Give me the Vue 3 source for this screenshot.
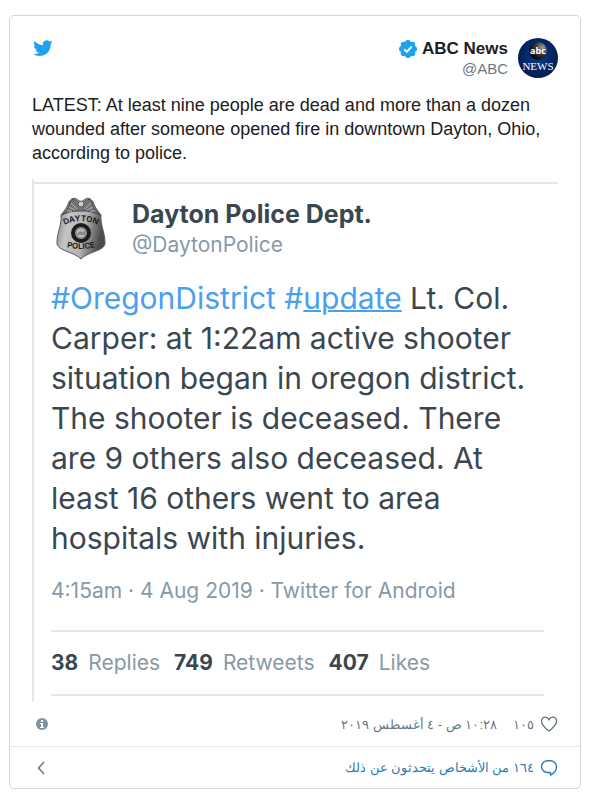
<template>
  <article class="card" dir="rtl">
    <div class="card-body">
      <header class="card-header">
        <a class="author" href="#">
          <svg class="avatar" viewBox="0 0 40 40" aria-hidden="true">
            <defs>
              <radialGradient id="abc-bg" cx="50%" cy="45%" r="60%">
                <stop offset="0" stop-color="#073f8c" />
                <stop offset="1" stop-color="#02184b" />
              </radialGradient>
              <radialGradient id="abc-ball" cx="75%" cy="30%" r="75%">
                <stop offset="0" stop-color="#9d9d9d" />
                <stop offset="0.5" stop-color="#3a3a3a" />
                <stop offset="1" stop-color="#050505" />
              </radialGradient>
            </defs>
            <circle cx="20" cy="20" r="20" fill="url(#abc-bg)" />
            <circle cx="20" cy="13" r="9" fill="url(#abc-ball)" />
            <text class="abc-small" x="20" y="16" text-anchor="middle">abc</text>
            <text class="abc-news" x="20" y="32" text-anchor="middle">NEWS</text>
          </svg>
          <span class="author-text">
            <span class="author-name">
              <bdi>ABC News</bdi>
              <svg class="verified" viewBox="0 0 18 18" role="img" aria-label="حساب موثق">
                <g fill="#1da1f2">
                  <circle cx="9" cy="9" r="7" />
                  <circle v-for="p in petals" :key="p.id" :cx="p.x" :cy="p.y" r="3" />
                </g>
                <path d="M5.2 9.3l2.6 2.6 4.9-5.6" fill="none" stroke="#fff" stroke-width="1.8" />
              </svg>
            </span>
            <span class="author-handle" dir="ltr">@ABC</span>
          </span>
        </a>
        <a class="brand" href="#" aria-label="Twitter">
          <svg viewBox="0 0 24 24" width="20" height="20">
            <path
              fill="#1da1f2"
              d="M23.64 4.94c-.86.38-1.78.64-2.75.75 1-.6 1.75-1.53 2.1-2.65-.92.55-1.95.95-3.04 1.16A4.79 4.79 0 0 0 11.8 8.57C7.82 8.37 4.3 6.46 1.93 3.56A4.8 4.8 0 0 0 3.4 9.95a4.77 4.77 0 0 1-2.17-.6v.06a4.79 4.79 0 0 0 3.84 4.7 4.8 4.8 0 0 1-2.16.08 4.79 4.79 0 0 0 4.47 3.32A9.6 9.6 0 0 1 .3 19.5a13.55 13.55 0 0 0 7.34 2.15c8.8 0 13.62-7.3 13.62-13.62l-.02-.62c.94-.68 1.75-1.52 2.4-2.47z"
            />
          </svg>
        </a>
      </header>

      <p class="tweet-text" dir="ltr">
        LATEST: At least nine people are dead and more than a dozen wounded after
        someone opened fire in downtown Dayton, Ohio, according to police.
      </p>

      <section class="quote" dir="ltr">
        <div class="quote-inner">
          <div class="quote-header">
            <svg class="badge" viewBox="0 0 50 64" aria-hidden="true">
              <defs>
                <linearGradient id="metal" x1="0" x2="1" y1="0" y2="0.25">
                  <stop offset="0" stop-color="#777" />
                  <stop offset="0.3" stop-color="#c4c4c4" />
                  <stop offset="0.65" stop-color="#b4b4b4" />
                  <stop offset="1" stop-color="#4b4b4b" />
                </linearGradient>
                <path id="arc-top" d="M6 30Q25 20 44 30" />
                <path id="arc-bottom" d="M4 49Q25 57 46 49" />
              </defs>
              <path
                d="M5 19C8 15 11 12 13 6C15 2 19 1 22 4L25 6L28 4C31 1 35 2 37 6C39 12 42 15 45 19C44 29 49 36 49 47C49 55 33 55 25 63C17 55 1 55 1 47C1 36 6 29 5 19Z"
                fill="url(#metal)"
                stroke="#555"
              />
              <path
                d="M6 19C10 15 13 12 14 6C16 2 20 3 23 7H27C30 3 34 2 36 6C37 12 40 15 44 19C36 15 31 15 25 15S13 15 6 19Z"
                fill="#737373"
                stroke="#444"
              />
              <path
                d="M15 7l6 6M13 11l6 3M11 15l5 0M35 7l-6 6M37 11l-6 3M39 15l-5 0"
                stroke="#b5b5b5"
                fill="none"
              />
              <circle cx="25" cy="8" r="3" fill="#ccc" stroke="#555" />
              <circle cx="25" cy="37" r="8" fill="#aaa" stroke="#1c1c1c" stroke-width="4" />
              <circle cx="25" cy="37" r="5" fill="#bdbdbd" stroke="#777" />
              <path d="M21 38l3-3 2 1 3-1v4h-8z" fill="#8a8a8a" />
              <text class="badge-text" text-anchor="middle">
                <textPath href="#arc-top" startOffset="50%">DAYTON</textPath>
              </text>
              <text class="badge-text" text-anchor="middle">
                <textPath href="#arc-bottom" startOffset="50%">POLICE</textPath>
              </text>
            </svg>
            <div class="quote-author">
              <strong>Dayton Police Dept.</strong>
              <span>@DaytonPolice</span>
            </div>
          </div>

          <p class="quote-text">
            <a href="#">#OregonDistrict</a> <a href="#">#<u>update</u></a> Lt. Col. Carper: at
            1:22am active shooter situation began in oregon district. The shooter is deceased.
            There are 9 others also deceased. At least 16 others went to area hospitals with
            injuries.
          </p>

          <p class="quote-meta">4:15am · 4 Aug 2019 · Twitter for Android</p>

          <ul class="stats">
            <li v-for="stat in stats" :key="stat.label">
              <strong>{{ stat.count }}</strong>
              <span>{{ stat.label }}</span>
            </li>
          </ul>
        </div>
      </section>

      <div class="info-row">
        <a class="like" href="#">
          <svg viewBox="0 0 18 16" width="18" height="16" aria-hidden="true">
            <path
              d="M9 15C5 12 1.5 9 1.5 5.200C1.500 2.800 3.200 1.200 5.200 1.200C7 1.200 8.300 2.200 9 4C9.700 2.200 11 1.200 12.800 1.200C14.800 1.200 16.500 2.800 16.500 5.200C16.500 9 13 12 9 15Z"
              fill="none"
              stroke="#697882"
              stroke-width="1.3"
              stroke-linejoin="round"
            />
          </svg>
          <span>١٠٥</span>
        </a>
        <a class="date" href="#">١٠:٢٨ ص - ٤ أغسطس ٢٠١٩</a>
        <a class="info" href="#" aria-label="معلومات">
          <svg viewBox="0 0 12 12" width="12" height="12">
            <circle cx="6" cy="6" r="6" fill="#8292a0" />
            <path d="M5 2h2v2H5zM4 5h3v4h1v1H4V9h1V6H4z" fill="#fff" />
          </svg>
        </a>
      </div>
    </div>

    <a class="replies" href="#">
      <svg viewBox="0 0 18 18" width="18" height="18" aria-hidden="true">
        <path
          d="M10.500 13.500V16.200C13.800 14.500 16.500 11.600 16.500 7.800C16.500 4.200 13.800 1.800 10.500 1.800H7.500C4.200 1.800 1.500 4.200 1.500 7.600S4.200 13.500 7.500 13.500Z"
          fill="none"
          stroke="#2b7bb9"
          stroke-width="1.4"
          stroke-linejoin="round"
        />
      </svg>
      <span>١٦٤ من الأشخاص يتحدثون عن ذلك</span>
      <svg class="chevron" viewBox="0 0 8 14" width="8" height="14" aria-hidden="true">
        <path d="M7 1L1.500 7L7 13" fill="none" stroke="#697882" stroke-width="1.6" />
      </svg>
    </a>
  </article>
</template>

<script setup>
const stats = [
  { count: 38, label: "Replies" },
  { count: 749, label: "Retweets" },
  { count: 407, label: "Likes" },
];

// scalloped edge of the verified mark
const petals = Array.from({ length: 8 }, (_, id) => {
  const angle = (id * Math.PI) / 4;
  return { id, x: 9 + 6 * Math.cos(angle), y: 9 + 6 * Math.sin(angle) };
});
</script>

<style>
body {
  background: #fff;
}
</style>

<style scoped>
.card {
  margin: 15px 19px 19px 9px;
  border: 1px solid #ccd6dd;
  border-radius: 5px;
  font-family: "Liberation Sans", Arial, sans-serif;
  color: #1c2022;
}

.card a {
  text-decoration: none;
}

.card svg {
  display: block;
  flex: none;
}

.card-body {
  padding: 22px 22px 0;
}

.card-header {
  display: flex;
  justify-content: space-between;
}

.brand {
  padding: 0 1px;
}

.author {
  display: flex;
  gap: 10px;
  color: #1c2022;
}

.avatar {
  width: 40px;
  height: 40px;
}

.abc-small {
  font: bold 9px "Open Sans", sans-serif;
  fill: #fff;
}

.abc-news {
  font: 11px "Liberation Serif", serif;
  fill: #fff;
}

.author-text {
  display: flex;
  flex-direction: column;
}

.author-name {
  display: flex;
  align-items: center;
  gap: 5px;
  font-size: 17px;
  font-weight: bold;
  line-height: 21px;
}

.verified {
  width: 18px;
  height: 18px;
}

.author-handle {
  color: #697882;
  font-size: 15px;
  line-height: 20px;
  text-align: right;
}

.tweet-text {
  margin: 14px 0;
  font-size: 18px;
  line-height: 24px;
}

.quote {
  border-left: 2px solid #e1e8ed;
  padding-top: 3px;
  color: #3b4750;
  font-family: Inter, Roboto, sans-serif;
}

.quote-inner {
  border-top: 2px solid #e1e8ed;
  padding: 12px 14px 6px 17px;
}

.quote-header {
  display: flex;
  gap: 26px;
  padding-left: 5px;
}

.badge {
  width: 50px;
  height: 64px;
}

.badge-text {
  font: bold 8px Inter, sans-serif;
  fill: #222;
}

.quote-author {
  display: flex;
  flex-direction: column;
}

.quote-author strong {
  font-size: 25px;
  line-height: 36px;
}

.quote-author span {
  color: #8899a6;
  font-size: 21px;
  line-height: 26px;
}

.quote-text {
  margin: 18px 0 0;
  font-size: 30px;
  line-height: 40px;
}

.quote-text a {
  color: #4a9fee;
}

.quote-text u {
  text-decoration-thickness: 2px;
}

.quote-meta {
  margin: 18px 0 24px;
  color: #8899a6;
  font-size: 21px;
  line-height: 30px;
}

.stats {
  display: flex;
  gap: 14px;
  margin: 0;
  padding: 0;
  border-top: 2px solid #e1e8ed;
  border-bottom: 2px solid #e1e8ed;
  list-style: none;
  font-size: 21px;
  line-height: 62px;
}

.stats li {
  display: flex;
  gap: 10px;
}

.stats span {
  color: #8899a6;
}

.info-row {
  display: flex;
  align-items: center;
  height: 44px;
  font-size: 13px;
}

.info-row a {
  color: #697882;
}

.like {
  display: flex;
  align-items: center;
  gap: 6px;
}

.date {
  margin-right: 16px;
}

.info {
  margin-right: auto;
  margin-left: 4px;
}

.replies {
  display: flex;
  align-items: center;
  gap: 6px;
  height: 41px;
  padding: 0 22px 0 27px;
  border-top: 1px solid #e1e8ed;
  color: #2b7bb9;
  font-size: 13px;
}

.chevron {
  margin-right: auto;
}
</style>
